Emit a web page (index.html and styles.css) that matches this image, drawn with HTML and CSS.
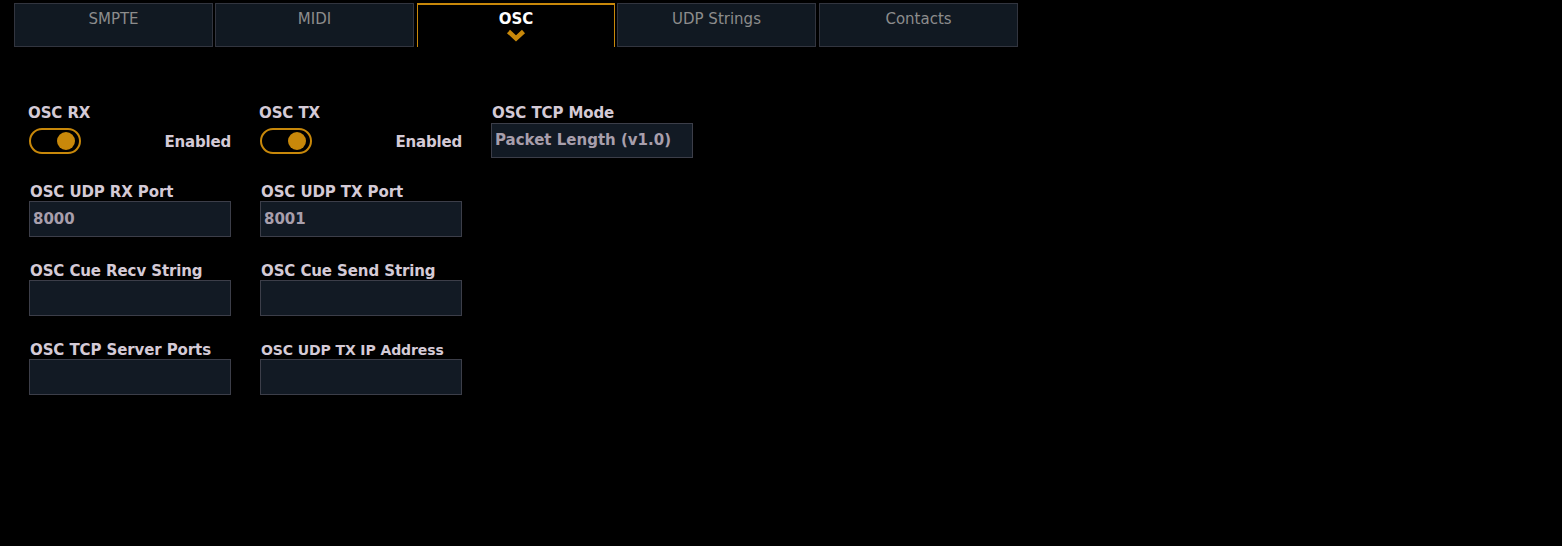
FILE: index.html
```html
<!DOCTYPE html>
<html>
<head>
<meta charset="utf-8">
<link rel="stylesheet" href="styles.css">
</head>
<body>
<div class="tabs">
  <div class="tab">SMPTE</div>
  <div class="tab">MIDI</div>
  <div class="tab active">OSC
    <svg class="chev" width="20" height="13" viewBox="0 0 20 13"><polyline points="2.5,2.5 10,9.5 17.5,2.5" fill="none" stroke="#c8880a" stroke-width="4.5"/></svg>
  </div>
  <div class="tab">UDP Strings</div>
  <div class="tab tab-last">Contacts</div>
</div>
<div class="form">
  <div class="field">
    <div class="label lbl-tight">OSC RX</div>
    <div class="toggle-row">
      <div class="toggle"><span class="knob"></span></div>
      <span class="state">Enabled</span>
    </div>
  </div>
  <div class="field">
    <div class="label lbl-tight">OSC TX</div>
    <div class="toggle-row">
      <div class="toggle"><span class="knob"></span></div>
      <span class="state">Enabled</span>
    </div>
  </div>
  <div class="field">
    <div class="label">OSC TCP Mode</div>
    <div class="select">Packet Length (v1.0)</div>
  </div>

  <div class="field">
    <div class="label">OSC UDP RX Port</div>
    <div class="input">8000</div>
  </div>
  <div class="field">
    <div class="label">OSC UDP TX Port</div>
    <div class="input">8001</div>
  </div>
  <div class="field"></div>

  <div class="field">
    <div class="label">OSC Cue Recv String</div>
    <div class="input"></div>
  </div>
  <div class="field">
    <div class="label">OSC Cue Send String</div>
    <div class="input"></div>
  </div>
  <div class="field"></div>

  <div class="field">
    <div class="label">OSC TCP Server Ports</div>
    <div class="input"></div>
  </div>
  <div class="field">
    <div class="label small">OSC UDP TX IP Address</div>
    <div class="input"></div>
  </div>
  <div class="field"></div>
</div>
</body>
</html>
```
FILE: styles.css
```css
html, body {
  margin: 0;
  padding: 0;
  background: #000;
  font-family: "DejaVu Sans", "Liberation Sans", sans-serif;
}
.tabs {
  display: flex;
  gap: 2px;
  padding: 3px 0 0 14px;
}
.tab {
  box-sizing: border-box;
  width: 199px;
  height: 44px;
  background: #111922;
  border: 1px solid #32353f;
  color: #8c8c8c;
  font-size: 15px;
  line-height: 18px;
  padding-top: 6px;
  text-align: center;
}
.tab.tab-last {
  margin-left: 1px;
}
.tab.active {
  background: #000;
  border: 1px solid #c8880a;
  border-bottom: none;
  color: #fff;
  font-weight: bold;
  width: 198px;
  margin-left: 1px;
  border-top-width: 2px;
  padding-top: 5px;
}
.chev {
  display: block;
  margin: 1px auto 0;
}
.form {
  display: grid;
  grid-template-columns: 202px 202px 202px;
  column-gap: 29px;
  row-gap: 25px;
  padding: 57px 0 0 29px;
}
.field {
  display: flex;
  flex-direction: column;
}
.label {
  color: #d4cad6;
  font-size: 15px;
  font-weight: bold;
  line-height: 17px;
  padding: 1px 0 0 1px;
  letter-spacing: -0.1px;
}
.label.lbl-tight {
  margin-left: -2px;
}
.label.small {
  font-size: 14px;
}
.toggle-row {
  display: flex;
  align-items: center;
  justify-content: space-between;
  margin-top: 6px;
}
.toggle {
  box-sizing: border-box;
  width: 52px;
  height: 26px;
  border: 2px solid #c8880a;
  border-radius: 13px;
  display: flex;
  justify-content: flex-end;
  align-items: center;
  padding-right: 4px;
}
.knob {
  width: 18px;
  height: 18px;
  border-radius: 50%;
  background: #c8880a;
}
.state {
  color: #d4cad6;
  font-size: 15px;
  font-weight: bold;
  margin-top: 2px;
  letter-spacing: -0.2px;
}
.input, .select {
  box-sizing: border-box;
  height: 36px;
  background: #121a24;
  border: 1px solid #3c3e49;
  color: #a89fac;
  font-size: 15px;
  font-weight: bold;
  line-height: 34px;
  padding-left: 3px;
}
.select {
  height: 35px;
  margin-top: 1px;
  line-height: 33px;
}
```
